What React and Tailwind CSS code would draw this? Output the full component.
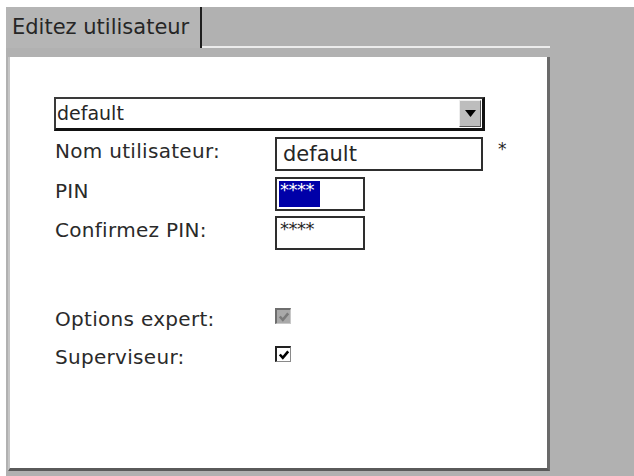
import React from 'react';

const font = { fontFamily: '"DejaVu Sans", "Liberation Sans", sans-serif' };

const Check = ({ color }) => (
  <svg width="12" height="12" viewBox="0 0 12 12">
    <path d="M1.8 5.5 L4.8 8.8 L10.2 2.4" fill="none" stroke={color} strokeWidth="2.6" />
  </svg>
);

const Row = ({ label, children, className = '' }) => (
  <div className={`flex items-start ${className}`}>
    <div className="w-[221px] pl-[1px] text-[20px] leading-none text-[#2a2a2a] tracking-[0.3px] pt-[4px]">{label}</div>
    {children}
  </div>
);

const App = () => {
  return (
    <div className="w-[634px] h-[476px] bg-white pl-[6px] pt-[7px] overflow-hidden" style={font}>
      <div className="w-[628px] h-[469px] bg-[#b1b1b1] flex flex-col">
        {/* tab header */}
        <div className="h-[41px] flex shrink-0">
          <div className="w-[196px] border-r-2 border-[#1e1e1e] pl-[6px] pt-[10px] text-[21px] leading-none text-[#262626] bg-[#b5b5b5]">
            Editez utilisateur
          </div>
          <div className="w-[348px] border-b-2 border-[#ececec]" />
          <div className="flex-1" />
        </div>

        {/* panel */}
        <div className="flex flex-1">
          <div className="w-[544px] pt-[9px] pl-[2px] flex flex-col">
            <div className="flex-1 mb-[5px] bg-white border-l-2 border-[#c6c6c6] border-r-[3px] border-r-[#6a6a6a] border-b-[3px] border-b-[#5a5a5a] pl-[44px] pt-[40px]">
              {/* dropdown */}
              <div className="w-[431px] h-[34px] flex items-center border-t-2 border-l-2 border-[#3a3a3a] border-r-[3px] border-b-[3px] border-r-[#111] border-b-[#111] bg-white">
                <div className="flex-1 pl-[1px] text-[19px] leading-none text-[#262626]">default</div>
                <div className="w-[22px] h-[27px] mr-[1px] bg-[#bdbdbd] border border-t-[#eeeeee] border-l-[#eeeeee] border-r-[#555] border-b-[#555] flex items-center justify-center">
                  <svg width="11" height="7" viewBox="0 0 11 7">
                    <path d="M0 0 H11 L5.5 7 Z" fill="#000" />
                  </svg>
                </div>
              </div>

              <Row label="Nom utilisateur:" className="mt-[6px]">
                <div className="w-[208px] h-[34px] border-2 border-[#2e2e2e] flex items-center pl-[6px] text-[21px] leading-none text-[#262626]">
                  default
                </div>
                <div className="ml-[15px] mt-[4px] text-[17px] leading-none text-[#262626]">*</div>
              </Row>

              <Row label="PIN" className="mt-[6px]">
                <div className="w-[90px] h-[34px] border-2 border-[#2e2e2e] p-[2px] flex">
                  <div className="w-[41px] h-full bg-[#0000a8] text-white text-[18px] leading-none tracking-[-0.5px] pl-[1px] pt-[0px]">
                    ****
                  </div>
                </div>
              </Row>

              <Row label="Confirmez PIN:" className="mt-[5px]">
                <div className="w-[90px] h-[34px] border-2 border-[#2e2e2e] text-[#262626] text-[18px] leading-none tracking-[-0.5px] pl-[3px] pt-[2px]">
                  ****
                </div>
              </Row>

              <Row label="Options expert:" className="mt-[55px]">
                <div className="w-[16px] h-[16px] mt-[3px] bg-[#a9a9a9] border-t-2 border-l-2 border-[#6e6e6e] border-r border-b border-r-[#c8c8c8] border-b-[#c8c8c8] flex items-center justify-center">
                  <Check color="#7a7a7a" />
                </div>
              </Row>

              <Row label="Superviseur:" className="mt-[14px]">
                <div className="w-[16px] h-[16px] mt-[3px] bg-white border-t-2 border-l-2 border-[#222] border-r border-b border-r-[#8a8a8a] border-b-[#8a8a8a] flex items-center justify-center">
                  <Check color="#000" />
                </div>
              </Row>
            </div>
          </div>
          <div className="flex-1" />
        </div>
      </div>
    </div>
  );
};

export default App;
